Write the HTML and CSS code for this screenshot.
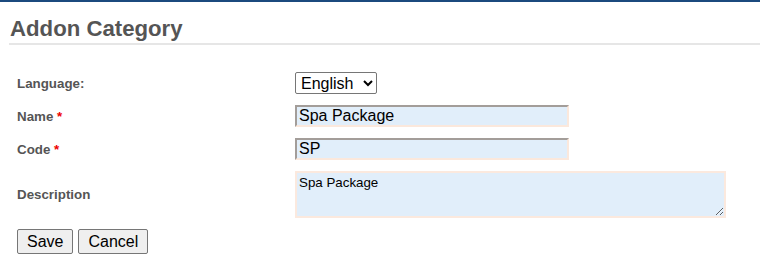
FILE: index.html
```html
<!DOCTYPE html>
<html lang="en">
<head>
  <meta charset="UTF-8">
  <meta name="viewport" content="width=device-width, initial-scale=1.0">
  <title>Addon Category</title>
  <link rel="stylesheet" href="styles.css">
</head>
<body>

  <div class="page">
    <h2 class="page-title">Addon Category</h2>

    <form class="addon-form" onsubmit="return false">
      <label class="field-label" for="language">Language:</label>
      <div class="field">
        <select id="language" class="lang-select">
          <option>English</option>
        </select>
      </div>

      <label class="field-label" for="name">Name <span class="req">*</span></label>
      <div class="field">
        <input type="text" id="name" class="text-input" value="Spa Package">
      </div>

      <label class="field-label" for="code">Code <span class="req">*</span></label>
      <div class="field">
        <input type="text" id="code" class="text-input" value="SP">
      </div>

      <label class="field-label" for="description">Description</label>
      <div class="field">
        <textarea id="description" class="text-area">Spa Package</textarea>
      </div>

      <div class="actions">
        <button type="submit" class="btn">Save</button>
        <button type="button" class="btn">Cancel</button>
      </div>
    </form>
  </div>

</body>
</html>
```

FILE: styles.css
```css
body {
  margin: 0;
  font-family: "Liberation Sans", Arial, sans-serif;
  background: #fff;
}

.page {
  border-top: 2px solid #1b4a7e;
}

.page-title {
  margin: 14px 0 0 9px;
  padding: 0 0 1px 1px;
  font-size: 22.2px;
  line-height: 26px;
  font-weight: bold;
  color: #555;
  border-bottom: 2px solid #e6e6e6;
}

.addon-form {
  display: grid;
  grid-template-columns: 278px 1fr;
  row-gap: 11px;
  align-items: center;
  padding: 27px 0 0 17px;
}

.field-label {
  font-size: 13.33px;
  font-weight: bold;
  color: #555;
}
.req { color: #e00; }

.field { display: flex; }

.lang-select {
  width: 82px;
  height: 22px;
  padding: 0 1px;
  font-family: "Liberation Sans", Arial, sans-serif;
  font-size: 16px;
  color: #000;
  background: #fff;
  border: 1px solid #767676;
  border-radius: 2px;
}

.text-input {
  box-sizing: border-box;
  width: 274px;
  height: 22px;
  padding: 0 2px;
  font-family: "Liberation Sans", Arial, sans-serif;
  font-size: 16px;
  color: #000;
  background: #e1eefa;
  border: 2px solid;
  border-color: #a39d99 #fbe8dc #fbe8dc #a39d99;
  outline: none;
}

.text-area {
  box-sizing: border-box;
  width: 431px;
  height: 47px;
  padding: 2px 2px;
  font-family: "Liberation Sans", Arial, sans-serif;
  font-size: 13.33px;
  color: #000;
  background: #e1eefa;
  border: 2px solid #fbe9de;
  outline: none;
}

.actions {
  grid-column: 1 / 3;
  display: flex;
  gap: 5px;
}

.btn {
  height: 25px;
  padding: 0 9px;
  font-family: "Liberation Sans", Arial, sans-serif;
  font-size: 16px;
  color: #000;
  background: #efefef;
  border: 1px solid #767676;
  border-radius: 2px;
}
```
